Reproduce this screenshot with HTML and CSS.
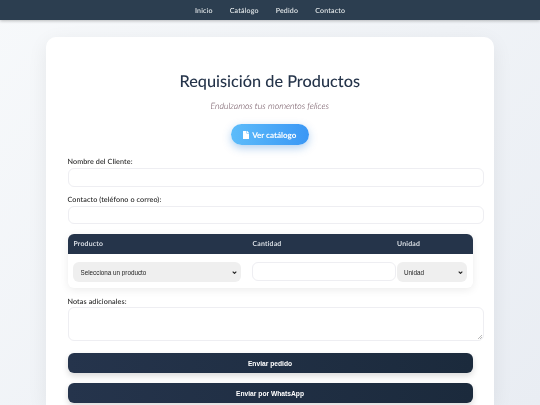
FILE: index.html
```html
<!DOCTYPE html>
<html lang="es">
<head>
<meta charset="utf-8">
<title>Requisición de Productos</title>
<link rel="stylesheet" href="styles.css">
</head>
<body>
<nav class="nav">
  <a href="#">Inicio</a>
  <a href="#">Catálogo</a>
  <a href="#">Pedido</a>
  <a href="#">Contacto</a>
</nav>
<main class="card">
  <h1 class="title">Requisición de Productos</h1>
  <p class="subtitle">Endulzamos tus momentos felices</p>
  <div class="catalog-wrap">
    <a class="catalog" href="#">
      <svg class="doc" viewBox="0 0 384 512" aria-hidden="true"><path d="M224 136V0H24C10.700 0 0 10.700 0 24v464c0 13.300 10.700 24 24 24h336c13.300 0 24-10.700 24-24V160H248c-13.200 0-24-10.800-24-24zm160-14.100v6.100H256V0h6.100c6.400 0 12.500 2.500 17 7l97.900 98c4.500 4.500 7 10.600 7 16.900z"/></svg>
      Ver catálogo
    </a>
  </div>
  <form class="form">
    <label class="label">Nombre del Cliente:</label>
    <input class="field field-name" type="text">
    <label class="label label-contact">Contacto (teléfono o correo):</label>
    <input class="field field-contact" type="text">
    <table class="table">
      <thead>
        <tr><th class="col-product">Producto</th><th class="col-qty">Cantidad</th><th class="col-unit">Unidad</th></tr>
      </thead>
      <tbody>
        <tr>
          <td><select class="select"><option>Selecciona un producto</option></select></td>
          <td><input class="qty" type="text"></td>
          <td><select class="select"><option>Unidad</option></select></td>
        </tr>
      </tbody>
    </table>
    <label class="label label-notes">Notas adicionales:</label>
    <textarea class="field notes"></textarea>
    <button class="submit" type="button">Enviar pedido</button>
    <button class="submit" type="button">Enviar por WhatsApp</button>
  </form>
</main>
</body>
</html>
```
FILE: styles.css
```css
* { box-sizing: border-box; }
html, body { margin: 0; height: 405px; overflow: hidden; }
body {
  font-family: "Lato", "Liberation Sans", sans-serif;
  background: linear-gradient(135deg, #f7f9fb 0%, #e9edf3 100%);
  color: #333;
  text-rendering: geometricPrecision;
}
.nav {
  height: 20px;
  background: #2c3e50;
  display: flex;
  justify-content: center;
  align-items: center;
  gap: 17px;
  box-shadow: 0 1px 3px rgba(0,0,0,.25);
  position: relative;
  will-change: transform;
}
.nav a { color: #ecf0f1; font-size: 7px; line-height: 10px; padding-top: 1px; font-weight: 500; text-decoration: none; letter-spacing: .2px; }
.card {
  width: 447.500px;
  margin: 17px 0 0 46px;
  padding: 35px 21.500px 0;
  height: 368px;
  background: #fff;
  border-radius: 10px 10px 0 0;
  box-shadow: 0 5px 20px rgba(0,0,0,.07);
  will-change: transform;
}
.title {
  margin: 0;
  text-align: center;
  font-size: 16.300px;
  line-height: 20px;
  font-weight: 500;
  color: #25344a;
}
.subtitle {
  margin: 8px 0 0;
  text-align: center;
  font-size: 8.700px;
  line-height: 12px;
  font-style: italic;
  font-weight: 300;
  color: #5d3c4a;
}
.catalog-wrap { display: flex; justify-content: center; margin-top: 12px; }
.catalog {
  width: 78.500px;
  height: 21px;
  display: flex;
  align-items: center;
  justify-content: center;
  gap: 3px;
  border-radius: 11px;
  background: linear-gradient(90deg, #5dbcfa, #3a97f5);
  color: #fff;
  font-size: 8px;
  font-weight: 700;
  text-decoration: none;
  box-shadow: 0 3px 8px rgba(33,120,210,.35);
}
.doc { width: 6px; height: 8px; fill: #fff; }
.form { width: 405px; margin-top: 12px; }
.label {
  display: block;
  font-size: 7.200px;
  font-weight: 500;
  line-height: 10px;
  color: #222;
  letter-spacing: .1px;
}
.label-contact { margin-top: 8px; }
.label-notes { margin-top: 9px; }
.field {
  display: block;
  width: 416.500px;
  margin-top: 1px;
  background: #fff;
  border: 1px solid #eeeef2;
  border-radius: 6px;
  outline: 0;
}
.field-name { height: 18.500px; }
.field-contact { height: 18px; }
.notes {
  height: 34.500px;
  resize: none;
  margin-top: 0;
  background: #fff linear-gradient(135deg, transparent 50%, #bbb 50%, #bbb 60%, transparent 60%, transparent 75%, #bbb 75%, #bbb 85%, transparent 85%) no-repeat right 1px bottom 1px / 4px 4px;
}
.table {
  width: 405px;
  margin-top: 10px;
  border-collapse: separate;
  border-spacing: 0;
  border-radius: 6px;
  box-shadow: 0 2px 8px rgba(0,0,0,.08);
  table-layout: fixed;
}
.table th {
  height: 20.500px;
  padding: 0 0 0 6px;
  background: #25344a;
  color: #e9edf2;
  font-size: 6.900px;
  font-weight: 600;
  text-align: left;
  letter-spacing: .2px;
}
.col-product { width: 179px; border-top-left-radius: 6px; }
.col-qty { width: 144.500px; }
.col-unit { border-top-right-radius: 6px; }
.table td { padding: 8px 6px 5px 5.500px; height: 33.500px; vertical-align: top; }
.select {
  display: block;
  width: 100%;
  height: 20px;
  border: 0;
  border-radius: 6px;
  appearance: none;
  background: #efefef url("data:image/svg+xml,%3Csvg xmlns='http://www.w3.org/2000/svg' viewBox='0 0 8 5'%3E%3Cpath d='M1 1l3 3 3-3' fill='none' stroke='%23222' stroke-width='1.800'/%3E%3C/svg%3E") no-repeat right 4px center / 5px 3px;
  font-family: "Liberation Sans", sans-serif;
  font-size: 6.300px;
  color: #222;
  padding: 0 7.500px;
}
.qty {
  display: block;
  width: 144px;
  height: 19px;
  border: 1px solid #eeeef2;
  border-radius: 6px;
  outline: 0;
  background: #fff;
}
.submit {
  display: block;
  width: 405px;
  height: 20px;
  margin-top: 10px;
  border: 0;
  border-radius: 6px;
  background: linear-gradient(90deg, #25344c, #1b2a3c);
  color: #fff;
  font-family: "Liberation Sans", sans-serif;
  font-size: 6.700px;
  font-weight: 700;
  box-shadow: 0 3px 6px rgba(0,0,0,.15);
}
.notes + .submit { margin-top: 12px; }
```
